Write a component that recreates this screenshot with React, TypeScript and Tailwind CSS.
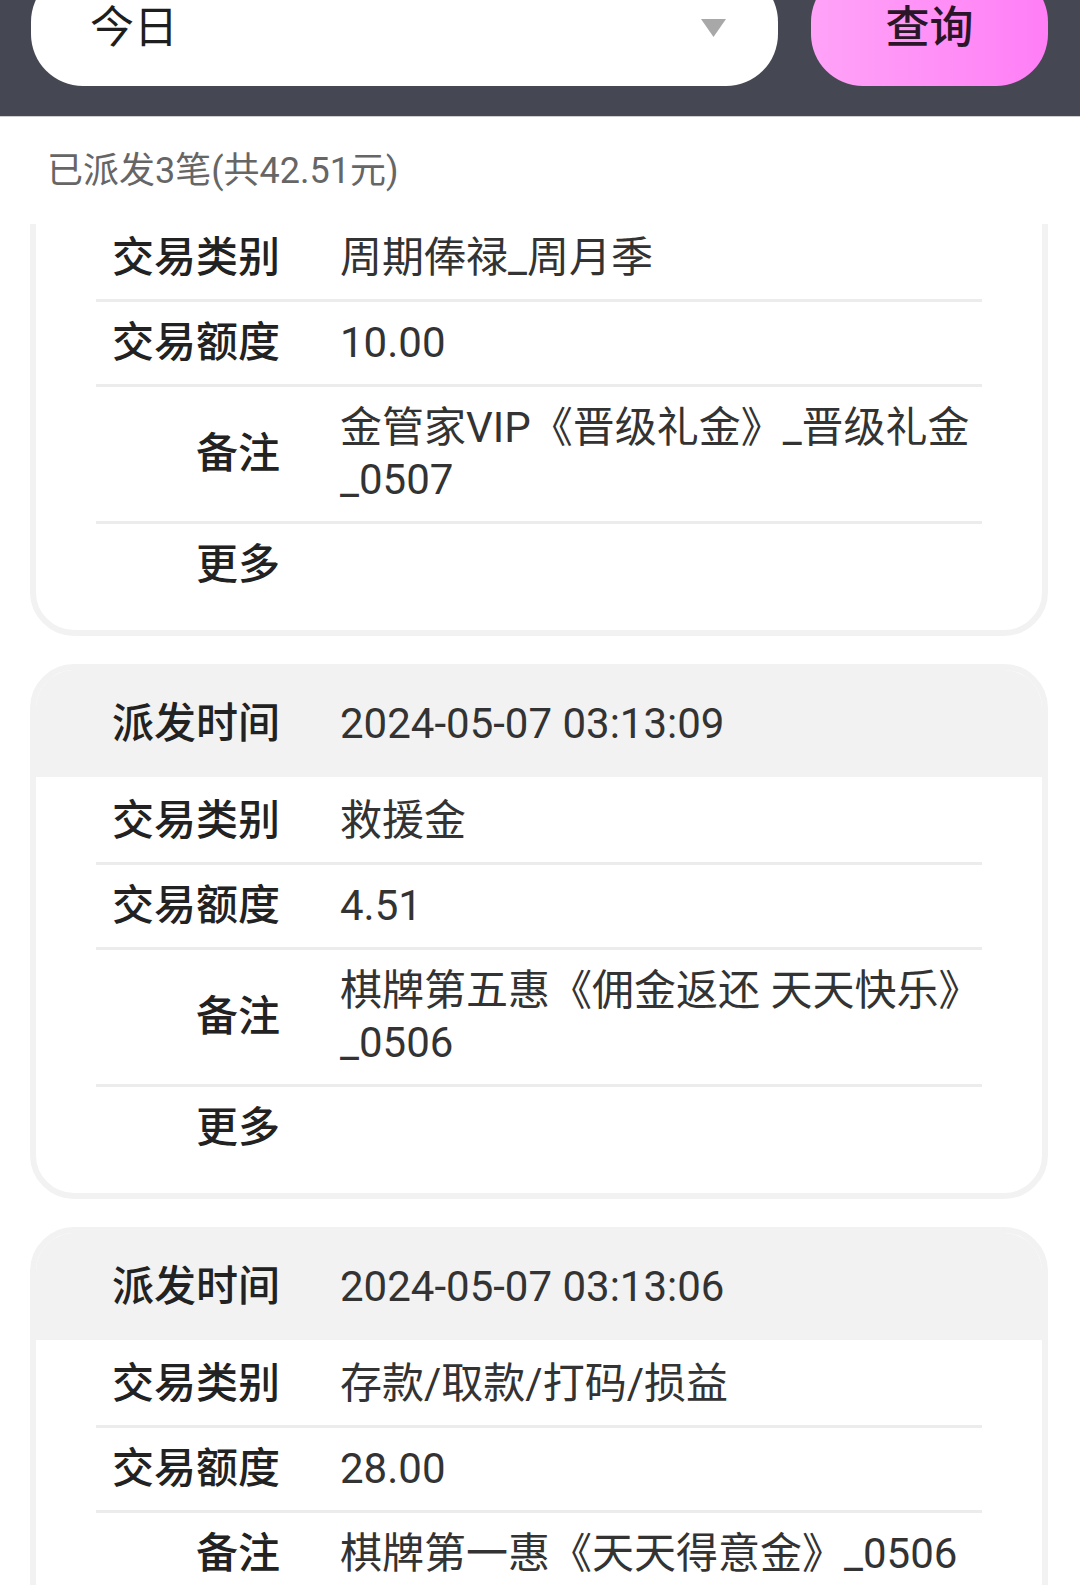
import React from "react";

type Row = { label: string; value?: string };
type Card = { time: string; rows: Row[] };

const cards: Card[] = [
  {
    time: "2024-05-07 03:13:12",
    rows: [
      { label: "交易类别", value: "周期俸禄_周月季" },
      { label: "交易额度", value: "10.00" },
      { label: "备注", value: "金管家VIP《晋级礼金》_晋级礼金_0507" },
      { label: "更多" },
    ],
  },
  {
    time: "2024-05-07 03:13:09",
    rows: [
      { label: "交易类别", value: "救援金" },
      { label: "交易额度", value: "4.51" },
      { label: "备注", value: "棋牌第五惠《佣金返还 天天快乐》_0506" },
      { label: "更多" },
    ],
  },
  {
    time: "2024-05-07 03:13:06",
    rows: [
      { label: "交易类别", value: "存款/取款/打码/损益" },
      { label: "交易额度", value: "28.00" },
      { label: "备注", value: "棋牌第一惠《天天得意金》_0506" },
      { label: "更多" },
    ],
  },
];

const font = { fontFamily: "Roboto, 'Noto Sans CJK SC', sans-serif" };

function RecordCard({ card, first }: { card: Card; first?: boolean }) {
  return (
    <div
      className={`ml-[30px] mr-[32px] rounded-[44px] border-[6px] border-[#f2f2f2] bg-white overflow-hidden ${
        first ? "mt-[-123px]" : "mt-[28px]"
      }`}
    >
      <div className="h-[107px] bg-[#f2f2f2] flex items-center px-[60px]">
        <div className="w-[184px] shrink-0 text-right text-[42px] leading-[52px] font-medium text-[#222]">
          派发时间
        </div>
        <div className="pl-[60px] text-[42px] leading-[52px] text-[#333]">{card.time}</div>
      </div>
      <div className="pt-[3px] pb-[24px] px-[60px]">
        {card.rows.map((r, i) => (
          <div
            key={i}
            className={`flex items-center py-[15px] ${
              i < card.rows.length - 1 ? "border-b-[3px] border-[#ececec]" : ""
            }`}
          >
            <div className="w-[184px] shrink-0 text-right text-[42px] leading-[52px] font-medium text-[#222]">
              {r.label}
            </div>
            <div className="pl-[60px] min-h-[52px] flex-1 text-[42px] leading-[52px] text-[#333] break-words">
              {r.value ?? ""}
            </div>
          </div>
        ))}
      </div>
    </div>
  );
}

export default function App() {
  return (
    <div className="w-[1080px] h-[1585px] bg-white overflow-hidden flex flex-col" style={font}>
      <div className="h-[117px] shrink-0 bg-[#454852] border-b border-[#cdcdd0] overflow-hidden flex items-start pl-[31px] pr-[32px] gap-[33px]">
        <div className="mt-[-30px] h-[116px] w-[747px] shrink-0 bg-white rounded-[52px] flex items-center pl-[59px] pr-[52px]">
          <span className="flex-1 text-[44px] leading-[52px] text-[#1e1e1e]">今日</span>
          <svg width="25" height="18" viewBox="0 0 25 18">
            <polygon points="0,0 25,0 12.5,18" fill="#a8a8a8" />
          </svg>
        </div>
        <div className="mt-[-30px] h-[116px] flex-1 rounded-[52px] bg-gradient-to-r from-[#ffa3f8] to-[#ff7ef6] flex items-center justify-center">
          <span className="text-[44px] leading-[52px] font-medium text-[#2a1628]">查询</span>
        </div>
      </div>
      <div className="h-[107px] shrink-0 flex items-center pl-[47px] text-[36px] text-[#666]">
        已派发3笔(共42.51元)
      </div>
      <div className="flex-1 overflow-hidden">
        {cards.map((c, i) => (
          <RecordCard key={i} card={c} first={i === 0} />
        ))}
      </div>
    </div>
  );
}
